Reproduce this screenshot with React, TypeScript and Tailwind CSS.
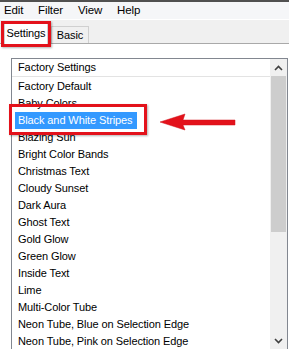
import React from 'react';

const Presets = [
    'Factory Default',
    'Baby Colors',
    'Black and White Stripes',
    'Blazing Sun',
    'Bright Color Bands',
    'Christmas Text',
    'Cloudy Sunset',
    'Dark Aura',
    'Ghost Text',
    'Gold Glow',
    'Green Glow',
    'Inside Text',
    'Lime',
    'Multi-Color Tube',
    'Neon Tube, Blue on Selection Edge',
    'Neon Tube, Pink on Selection Edge',
];

const MenuItems = [
    { label: 'Edit', width: 'w-[34px]' },
    { label: 'Filter', width: 'w-[40px]' },
    { label: 'View', width: 'w-[39px]' },
    { label: 'Help', width: 'w-[34px]' },
];

function Chevron({ up }: { up: boolean }) {

    return (

        <svg width="9" height="6" viewBox="0 0 9 6">
            <polyline points={up ? '1,5 4.5,1.5 8,5' : '1,1 4.5,4.5 8,1'} fill="none" stroke="#404040" strokeWidth="1.6" />
        </svg>

    );

}

function App() {

    const Selected = 'Black and White Stripes';

    return (

        <div className="relative w-[289px] h-[349px] overflow-hidden bg-white flex flex-col text-[11px] tracking-[-0.1px] text-black font-['Liberation_Sans',Arial,sans-serif]">

            {/* Menu bar */}

            <div className="h-[19px] shrink-0 border-t-2 border-[#505050] bg-[#f5f6f8] flex items-center pl-[4px] text-[11.5px]">

                {MenuItems.map((Item) => (

                    <span key={Item.label} className={`${Item.width} leading-none`}>{Item.label}</span>

                ))}

            </div>

            {/* Tabs */}

            <div className="h-[25px] shrink-0 bg-[#f0f0f0] border-t border-white border-b border-b-[#a9a9a9] flex items-end pl-[4px]">

                <div className="relative -mb-px h-[22px] w-[44px] bg-white border border-b-0 border-[#d0d0d0] flex items-center justify-center">
                    Settings
                </div>

                <div className="h-[17px] w-[38px] ml-[3px] bg-[#f0f0f0] border border-b-0 border-[#d0d0d0] flex items-center justify-center">
                    Basic
                </div>

            </div>

            {/* Panel */}

            <div className="flex-1 pl-[11px] pt-[14px]">

                <div className="w-[277px] h-[300px] border border-[#828790] flex">

                    <div className="flex-1 flex flex-col">

                        <div className="h-[18px] shrink-0 border-b border-[#e3e3e3] pl-[6px] flex items-center">
                            Factory Settings
                        </div>

                        <div className="pt-[1px] pl-[3px] flex flex-col">

                            {Presets.map((Name) => (

                                <div key={Name} className="h-[17px] flex items-center">

                                    <span className={`h-[17px] pl-[3px] pr-[5px] flex items-center whitespace-nowrap ${Name === Selected ? 'bg-[#3399ff] text-white' : ''}`}>
                                        {Name}
                                    </span>

                                </div>

                            ))}

                        </div>

                    </div>

                    {/* Scrollbar */}

                    <div className="w-[17px] shrink-0 bg-[#f0f0f0] flex flex-col">

                        <div className="h-[17px] flex items-center justify-center">
                            <Chevron up={true} />
                        </div>

                        <div className="h-[156px] mx-[1px] bg-[#cdcdcd]" />

                        <div className="h-[100px]" />

                        <div className="h-[17px] flex items-center justify-center">
                            <Chevron up={false} />
                        </div>

                    </div>

                </div>

            </div>

            {/* Annotations */}

            <div className="absolute left-[1px] top-[21px] w-[50px] h-[26px] border-[3px] border-[#e3121b] shadow-[1px_1px_2px_rgba(0,0,0,0.3)]" />

            <div className="absolute left-[9px] top-[104px] w-[138px] h-[31px] border-[3px] border-[#e3121b] shadow-[1px_1px_2px_rgba(0,0,0,0.3)]" />

            <svg className="absolute left-[158px] top-[112px]" width="82" height="22" viewBox="0 0 82 22">
                <path d="M2,10 L27,2 L25,8 L77,8 L77,13 L25,13 L27,18 Z" fill="#e3121b" stroke="#d01018" strokeWidth="0.5" strokeLinejoin="round" />
            </svg>

        </div>

    );

}

export default App;
